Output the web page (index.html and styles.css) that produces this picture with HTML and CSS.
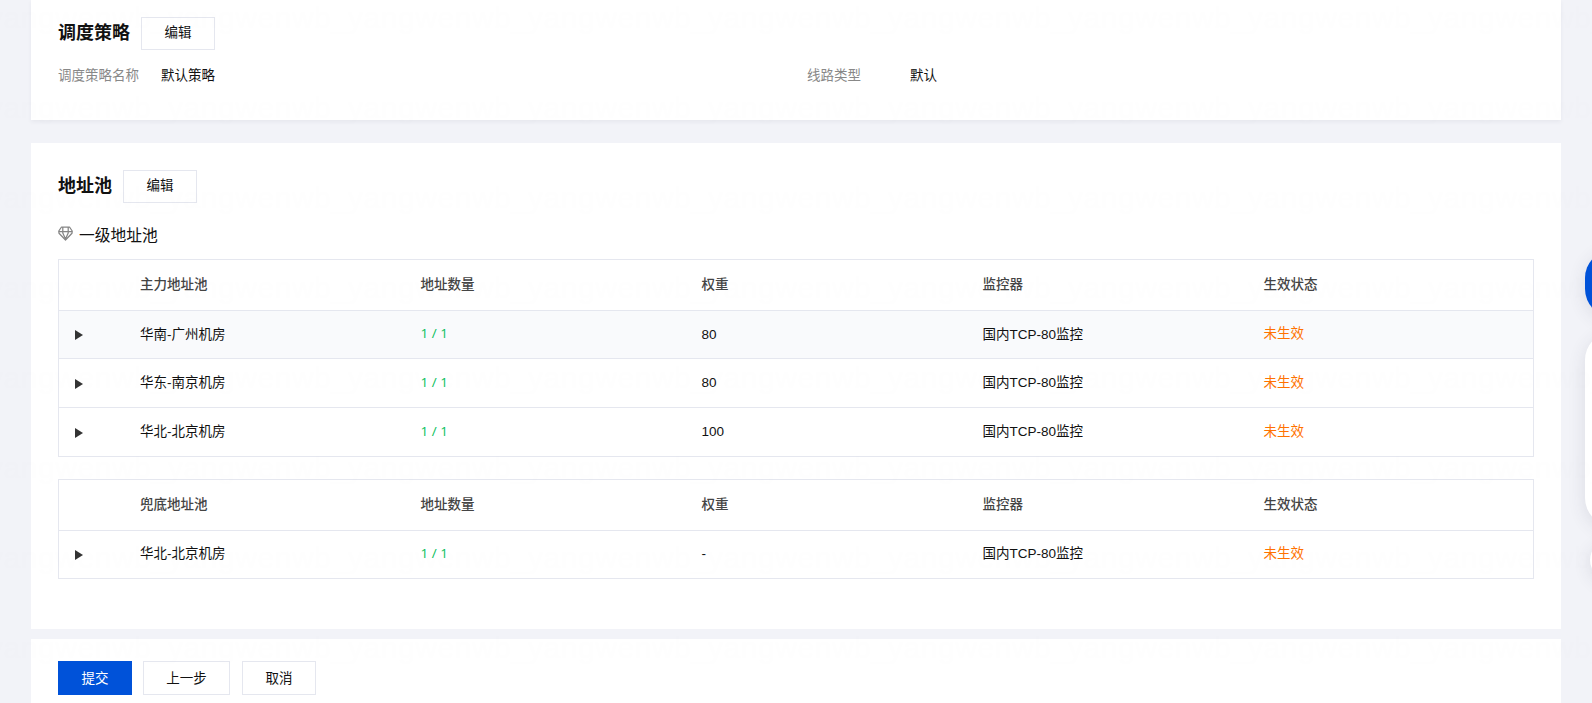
FILE: index.html
```html
<!DOCTYPE html>
<html lang="zh-CN">
<head>
<meta charset="utf-8">
<title>地址池</title>
<link rel="stylesheet" href="styles.css">
</head>
<body>
<main class="page">
  <section class="panel policy">
    <div class="panel-head"><h2>调度策略</h2><button class="btn">编辑</button></div>
    <div class="fields">
      <div class="field"><span class="label">调度策略名称</span><span class="value">默认策略</span></div>
      <div class="field"><span class="label">线路类型</span><span class="value">默认</span></div>
    </div>
  </section>

  <section class="panel pools">
    <div class="panel-head"><h2>地址池</h2><button class="btn">编辑</button></div>
    <div class="level">
      <svg class="gem" viewBox="0 0 15 15" fill="none" stroke="#858585" stroke-width="1.25" stroke-linejoin="round"><path d="M3.5 1h8L14.2 5 14 7.2 7.5 14 1 7.2.8 5z"/><path d="M.8 5.7h13.4M4.8 1v6L7.5 13 10.2 7V1"/></svg>
      <span>一级地址池</span>
    </div>
    <div class="table">
      <div class="row head"><span></span><span>主力地址池</span><span>地址数量</span><span>权重</span><span>监控器</span><span>生效状态</span></div>
      <div class="row hover"><i class="arrow"></i><span>华南-广州机房</span><span class="ok">1 / 1</span><span>80</span><span>国内TCP-80监控</span><span class="warn">未生效</span></div>
      <div class="row"><i class="arrow"></i><span>华东-南京机房</span><span class="ok">1 / 1</span><span>80</span><span>国内TCP-80监控</span><span class="warn">未生效</span></div>
      <div class="row"><i class="arrow"></i><span>华北-北京机房</span><span class="ok">1 / 1</span><span>100</span><span>国内TCP-80监控</span><span class="warn">未生效</span></div>
    </div>
    <div class="table">
      <div class="row head"><span></span><span>兜底地址池</span><span>地址数量</span><span>权重</span><span>监控器</span><span>生效状态</span></div>
      <div class="row raised"><i class="arrow"></i><span>华北-北京机房</span><span class="ok">1 / 1</span><span>-</span><span>国内TCP-80监控</span><span class="warn">未生效</span></div>
    </div>
  </section>

  <section class="panel actions">
    <button class="btn primary">提交</button>
    <button class="btn wide">上一步</button>
    <button class="btn">取消</button>
  </section>
</main>
<div class="dock dock-main"></div>
<div class="dock dock-tools"></div>
<div class="dock dock-toggle"></div>
<svg class="watermark" width="1592" height="703" aria-hidden="true">
  <defs>
    <pattern id="mark" x="-12" y="-10" width="180" height="90" patternUnits="userSpaceOnUse">
      <text x="0" y="38" textLength="180">yangwenwb_</text>
    </pattern>
  </defs>
  <rect width="1592" height="703" fill="url(#mark)"/>
</svg>
</body>
</html>
```
FILE: styles.css
```css
* { box-sizing: border-box; }
body {
  margin: 0;
  width: 1592px;
  height: 703px;
  position: relative;
  overflow: hidden;
  background: #f2f3f8;
  color: #111;
  font: 13.5px/20px "Liberation Sans", "Noto Sans CJK SC", sans-serif;
}
.page { display: flex; flex-direction: column; padding: 0 31px; }
.panel { background: #fff; padding: 0 27px; box-shadow: 0 2px 4px rgba(54, 58, 80, .06); }
.policy { height: 120px; padding-top: 17px; margin-bottom: 23px; }
.pools { height: 486px; padding-top: 27px; margin-bottom: 10px; box-shadow: none; }
.actions { height: 64px; padding-top: 22px; display: flex; gap: 11px; box-shadow: none; }
.panel-head { display: flex; align-items: center; height: 33px; }
h2 { margin: 0 11px 0 0; padding-bottom: 1px; font-size: 18px; line-height: 24px; font-weight: 700; }
.btn {
  width: 74px;
  height: 33px;
  padding: 0;
  border: 1px solid #e5e7ef;
  background: #fff;
  color: #111;
  font: inherit;
}
.panel-head .btn { padding-bottom: 1px; }
.actions .btn { height: 34px; padding-top: 1px; }
.actions .btn:last-child { margin-left: 1px; }
.actions .primary { background: #0052d9; border-color: #0052d9; color: #fff; }
.actions .wide { width: 87px; }
.fields { display: grid; grid-template-columns: 749px 1fr; padding-top: 16px; }
.field { display: flex; }
.label { width: 103px; color: #888; }
.level { display: flex; align-items: center; height: 22px; margin: 21px 0 13px; padding-top: 2px; font-size: 15.75px; }
.gem { width: 15px; height: 15px; margin: -5px 6px 0 0; }
.table { border: 1px solid #e5e7ef; margin-bottom: 22px; height: 198px; }
.table + .table { height: 100px; }
.row {
  display: grid;
  grid-template-columns: 81px 280.6px repeat(3, 281px) 1fr;
  align-items: center;
  height: 49px;
  border-bottom: 1px solid #e5e7ef;
}
.row:last-child { border-bottom: 0; height: 48px; }
.row.head { height: 51px; color: #444; font-weight: 500; padding-bottom: 1px; }
.row.hover { height: 48px; background: #f9fafc; }
.row.raised { padding-bottom: 2px; }
.arrow { width: 0; height: 0; margin: 1px 0 0 16px; border: 5px solid transparent; border-left: 8px solid #333; border-right: 0; }
.ok { color: #0abf5b; font-family: "Open Sans", sans-serif; padding-bottom: 3px; }
.warn { color: #ff7200; padding-bottom: 1px; }
.dock { position: absolute; background: #fff; box-shadow: 0 4px 18px rgba(54, 58, 80, .12); }
.dock-main { left: 1584.5px; top: 250px; width: 64px; height: 67px; border-radius: 28px; background: #0052d9; }
.dock-tools { left: 1584.5px; top: 332px; width: 64px; height: 194px; border-radius: 28px; }
.dock-toggle { left: 1589.5px; top: 541px; width: 38px; height: 38px; border-radius: 50%; }
.watermark { position: absolute; inset: 0; pointer-events: none; }
.watermark text { font: 30px "Liberation Sans", sans-serif; fill: rgba(0, 0, 0, .005); }
```
